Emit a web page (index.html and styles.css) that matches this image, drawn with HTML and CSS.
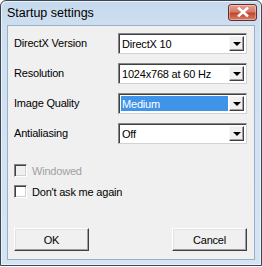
FILE: index.html
```html
<!DOCTYPE html>
<html>
<head>
<meta charset="utf-8">
<link rel="stylesheet" href="styles.css">
</head>
<body>
<div class="window">
  <div class="titlebar">
    <span class="title">Startup settings</span>
    <div class="close">
      <svg width="14" height="10" viewBox="0 0 14 10"><path d="M3 1.5 L11 8.5 M11 1.5 L3 8.5" stroke="#fff" stroke-width="2.6" stroke-linecap="square"/></svg>
    </div>
  </div>
  <div class="client">
    <div class="rows">
      <div class="row"><span class="label">DirectX Version</span><div class="combo"><span class="value">DirectX 10</span><span class="drop"><i></i></span></div></div>
      <div class="row"><span class="label">Resolution</span><div class="combo"><span class="value">1024x768 at 60 Hz</span><span class="drop"><i></i></span></div></div>
      <div class="row"><span class="label">Image Quality</span><div class="combo"><span class="value selected">Medium</span><span class="drop"><i></i></span></div></div>
      <div class="row"><span class="label">Antialiasing</span><div class="combo"><span class="value">Off</span><span class="drop"><i></i></span></div></div>
    </div>
    <div class="checks">
      <label class="check disabled"><span class="box"></span>Windowed</label>
      <label class="check"><span class="box"></span>Don't ask me again</label>
    </div>
    <div class="buttons">
      <div class="btn">OK</div>
      <div class="btn">Cancel</div>
    </div>
  </div>
</div>
</body>
</html>
```
FILE: styles.css
```css
html, body { margin: 0; padding: 0; }
body { width: 262px; height: 267px; overflow: hidden; background: #fff; }
.window {
  box-sizing: border-box;
  width: 262px; height: 266px;
  border: 1px solid #3c4654;
  border-radius: 6px 6px 0 0;
  background: linear-gradient(#c6d9ec, #cfe0f1 30px, #d5e4f3);
  display: flex; flex-direction: column;
  padding: 0 6px 5px 6px;
  box-shadow: inset 1px 1px 0 #e9f1f9, inset -1px -1px 0 #e9f1f9;
}
.titlebar {
  height: 24px; flex: none;
  display: flex; align-items: center; justify-content: space-between;
}
.title {
  font-family: "Liberation Sans", Arial, sans-serif;
  font-size: 12.5px; color: #000;
}
.close {
  width: 29px; height: 17px; margin-top: -2px; margin-right: -2px;
  box-sizing: border-box;
  border: 1px solid #6d2a23;
  border-radius: 3px;
  background: linear-gradient(#e3a292, #d27a66 45%, #c0472f 55%, #d6806a);
  display: flex; align-items: center; justify-content: center;
  box-shadow: inset 0 0 0 1px rgba(255,255,255,0.35);
}
.client {
  flex: 1;
  background: #f0f0f0;
  border: 1px solid #9ab0c6;
  display: flex; flex-direction: column;
  font-family: "Liberation Sans", Arial, sans-serif;
  font-size: 11px; color: #000; letter-spacing: -0.2px;
}
.rows { padding: 7px 7px 0 5px; display: flex; flex-direction: column; gap: 9px; }
.row { display: flex; align-items: center; height: 21px; }
.label { width: 104px; flex: none; padding-left: 1px; margin-top: -2px; }
.combo {
  box-sizing: border-box;
  width: 130px; height: 21px;
  background: #fff;
  border: 1px solid; border-color: #828790 #d2d2d2 #d2d2d2 #828790;
  box-shadow: inset 1px 1px 0 #404040;
  display: flex; align-items: stretch;
  padding: 2px;
}
.value {
  flex: 1; display: flex; align-items: center; padding-left: 1px;
  margin-right: 1px;
}
.value.selected { background: #3f93e8; color: #fff; }
.drop {
  width: 15px; flex: none;
  box-sizing: border-box;
  background: #f0f0f0;
  border: 1px solid; border-color: #f8f8f8 #404040 #404040 #f8f8f8;
  box-shadow: inset -1px -1px 0 #a0a0a0;
  display: flex; align-items: center; justify-content: center;
}
.drop i {
  width: 0; height: 0;
  border-left: 4px solid transparent; border-right: 4px solid transparent;
  border-top: 4px solid #000;
  margin-top: 1px;
}
.checks { padding: 20px 0 0 6px; display: flex; flex-direction: column; gap: 8px; }
.check { display: flex; align-items: center; gap: 5px; height: 13px; }
.box {
  width: 13px; height: 13px; box-sizing: border-box; background: #fff;
  border: 1px solid; border-color: #808080 #fff #fff #808080;
  box-shadow: inset 1px 1px 0 #404040, inset -1px -1px 0 #d4d0c8;
}
.check.disabled { color: #a0a0a0; }
.check.disabled .box { background: #f0f0f0; }
.buttons { margin-top: auto; padding: 0 7px 8px 6px; display: flex; justify-content: space-between; }
.btn {
  box-sizing: border-box; width: 75px; height: 23px;
  background: #f0f0f0;
  border: 1px solid; border-color: #fff #404040 #404040 #fff;
  box-shadow: inset -1px -1px 0 #a0a0a0, inset 1px 1px 0 #e3e3e3;
  display: flex; align-items: center; justify-content: center;
}
```
